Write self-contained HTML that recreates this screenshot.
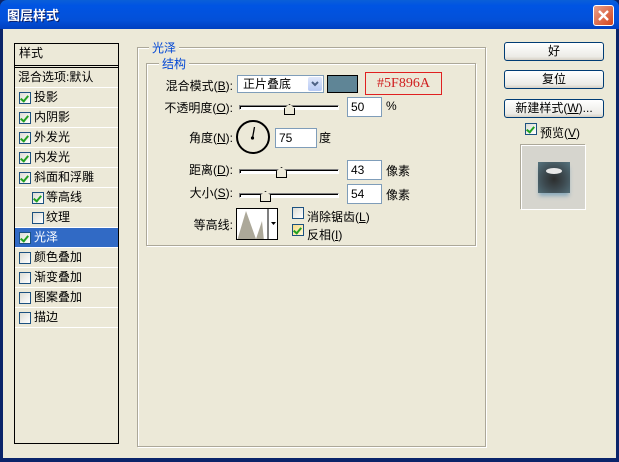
<!DOCTYPE html>
<html><head><meta charset="utf-8"><style>
*{margin:0;padding:0;box-sizing:border-box}
body{width:619px;height:462px;overflow:hidden;background:#0a246a;font-family:"Liberation Sans","Noto Sans CJK SC","WenQuanYi Zen Hei",sans-serif;font-size:12px;color:#000;position:relative}
.a{position:absolute}
#title{left:0;top:0;width:619px;height:29px;background:linear-gradient(#0a5fd8,#0054e3 20%,#0350d8 70%,#0040c0);border-radius:7px 7px 0 0}
#title span{position:absolute;left:7px;top:5px;color:#fff;font-weight:bold;font-size:13px;text-shadow:1px 1px #0a1e6a}
#close{left:593px;top:5px;width:21px;height:21px;background:linear-gradient(135deg,#e8a08a,#d3441c);border:1px solid #fff;border-radius:3px}
#body{left:3px;top:29px;width:613px;height:429px;background:#ece9d8}
#list{left:14px;top:43px;width:105px;height:401px;border:1px solid #000;background:#ece9d8}
.row{position:absolute;left:0;width:103px;height:20px;border-bottom:1px solid #fff;line-height:19px;font-size:12px}
.cb{position:absolute;top:4px;width:12px;height:12px;border:1px solid #1c5180;background:linear-gradient(135deg,#dcdcd4,#fff)}
.cb.c::after{content:"";position:absolute;left:2px;top:1px;width:3px;height:6px;border:solid #21a121;border-width:0 2px 2px 0;transform:rotate(40deg)}
.sel{background:#316ac5;color:#fff}
.grp{border:1px solid #aca899;box-shadow:1px 1px 0 #fff inset,1px 1px 0 #fff}
.leg{background:#ece9d8;color:#0046d5;padding:0 3px;font-size:12px}
.lbl{font-size:12px;text-align:right}
.inp{background:#fff;border:1px solid #7f9db9;height:20px;line-height:18px;padding-left:3px}
.track{height:5px;border:1px solid #000;border-color:#808080 #fff #fff #808080;background:#fff;box-shadow:inset 1px 1px #000}
.thumb{width:11px;height:11px;background:#ece9d8;border:1px solid #000;clip-path:polygon(50% 0,100% 40%,100% 100%,0 100%,0 40%)}
.btn{left:504px;width:100px;height:19px;border:1px solid #003c74;border-radius:3px;background:linear-gradient(#fff,#ecebe6 80%,#d6d0c5);text-align:center;line-height:17px;font-size:12px}
</style></head><body>
<div id="title" class="a"><span>图层样式</span></div>
<div id="close" class="a"><svg width="19" height="19"><path d="M5 5L14 14M14 5L5 14" stroke="#fff" stroke-width="2.4"/></svg></div>
<div id="body" class="a"></div>

<div id="list" class="a">
 <div class="row" style="top:0;padding-left:4px;border-bottom:3px double #000;height:24px">样式</div>
 <div class="row" style="top:24px;padding-left:3px">混合选项:默认</div>
 <div class="row" style="top:44px"><div class="cb c" style="left:4px"></div><span style="margin-left:19px">投影</span></div>
 <div class="row" style="top:64px"><div class="cb c" style="left:4px"></div><span style="margin-left:19px">内阴影</span></div>
 <div class="row" style="top:84px"><div class="cb c" style="left:4px"></div><span style="margin-left:19px">外发光</span></div>
 <div class="row" style="top:104px"><div class="cb c" style="left:4px"></div><span style="margin-left:19px">内发光</span></div>
 <div class="row" style="top:124px"><div class="cb c" style="left:4px"></div><span style="margin-left:19px">斜面和浮雕</span></div>
 <div class="row" style="top:144px"><div class="cb c" style="left:17px"></div><span style="margin-left:31px">等高线</span></div>
 <div class="row" style="top:164px"><div class="cb" style="left:17px"></div><span style="margin-left:31px">纹理</span></div>
 <div class="row sel" style="top:184px"><div class="cb c" style="left:4px"></div><span style="margin-left:19px">光泽</span></div>
 <div class="row" style="top:204px"><div class="cb" style="left:4px"></div><span style="margin-left:19px">颜色叠加</span></div>
 <div class="row" style="top:224px"><div class="cb" style="left:4px"></div><span style="margin-left:19px">渐变叠加</span></div>
 <div class="row" style="top:244px"><div class="cb" style="left:4px"></div><span style="margin-left:19px">图案叠加</span></div>
 <div class="row" style="top:264px"><div class="cb" style="left:4px"></div><span style="margin-left:19px">描边</span></div>
</div>

<div class="a grp" style="left:137px;top:47px;width:349px;height:400px"></div>
<div class="a leg" style="left:149px;top:39px">光泽</div>
<div class="a grp" style="left:146px;top:63px;width:330px;height:183px"></div>
<div class="a leg" style="left:159px;top:55px">结构</div>

<div class="a lbl" style="left:150px;top:77px;width:83px">混合模式(<u>B</u>):</div>
<div class="a inp" style="left:237px;top:75px;width:87px;height:18px;line-height:16px;padding-left:5px">正片叠底</div>
<div class="a" style="left:308px;top:77px;width:14px;height:14px;background:linear-gradient(#e0e8fb,#b6c9f4);border-radius:2px"><svg width="14" height="14"><path d="M4 5L7 8L10 5" stroke="#4d6185" stroke-width="2" fill="none"/></svg></div>
<div class="a" style="left:327px;top:75px;width:31px;height:18px;background:#5f8596;border:1px solid #000"></div>
<div class="a" style="left:365px;top:72px;width:77px;height:23px;border:1px solid #e02020;color:#d02020;font-family:'Liberation Serif',serif;font-size:14px;line-height:21px;text-align:center">#5F896A</div>

<div class="a lbl" style="left:150px;top:99px;width:83px">不透明度(<u>O</u>):</div>
<div class="a track" style="left:239px;top:105px;width:100px"></div>
<div class="a thumb" style="left:284px;top:104px"></div>
<div class="a inp" style="left:347px;top:97px;width:35px">50</div>
<div class="a" style="left:386px;top:99px">%</div>

<div class="a lbl" style="left:150px;top:129px;width:83px">角度(<u>N</u>):</div>
<div class="a" style="left:236px;top:120px;width:34px;height:34px;border:2px solid #000;border-radius:50%"></div>
<svg class="a" style="left:236px;top:120px" width="34" height="34"><path d="M16.5 18L18.5 7" stroke="#000" stroke-width="1.3"/><circle cx="16.5" cy="18" r="1.6"/></svg>
<div class="a inp" style="left:275px;top:128px;width:42px">75</div>
<div class="a" style="left:319px;top:129px">度</div>

<div class="a lbl" style="left:150px;top:161px;width:83px">距离(<u>D</u>):</div>
<div class="a track" style="left:239px;top:169px;width:100px"></div>
<div class="a thumb" style="left:276px;top:167px"></div>
<div class="a inp" style="left:347px;top:160px;width:35px">43</div>
<div class="a" style="left:386px;top:162px">像素</div>

<div class="a lbl" style="left:150px;top:184px;width:83px">大小(<u>S</u>):</div>
<div class="a track" style="left:239px;top:193px;width:100px"></div>
<div class="a thumb" style="left:260px;top:191px"></div>
<div class="a inp" style="left:347px;top:184px;width:35px">54</div>
<div class="a" style="left:386px;top:186px">像素</div>

<div class="a lbl" style="left:150px;top:216px;width:83px">等高线:</div>
<div class="a" style="left:236px;top:208px;width:42px;height:32px;border:1px solid #000;background:#fff;overflow:hidden">
<svg width="42" height="32"><path d="M0 32L9 2L19 30L25 12L27 32Z" fill="#aca899"/><path d="M31 0V32" stroke="#000"/><path d="M34 13h5l-2.5 3z" fill="#000"/></svg></div>
<div class="a cb" style="left:292px;top:207px;border-color:#1c5180"></div>
<div class="a" style="left:307px;top:208px">消除锯齿(<u>L</u>)</div>
<div class="a cb c" style="left:292px;top:224px;background:linear-gradient(135deg,#f6dc8a,#fff7d6)"></div>
<div class="a" style="left:307px;top:226px">反相(<u>I</u>)</div>

<div class="a btn" style="top:42px">好</div>
<div class="a btn" style="top:70px">复位</div>
<div class="a btn" style="top:99px">新建样式(<u>W</u>)...</div>
<div class="a cb c" style="left:525px;top:123px"></div>
<div class="a" style="left:540px;top:124px">预览(<u>V</u>)</div>
<div class="a" style="left:521px;top:145px;width:65px;height:65px;background:#d6d5ce;border:1px solid #fff;box-shadow:-1px -1px #aca899"></div>
<div class="a" style="left:538px;top:162px;width:32px;height:31px;background:radial-gradient(circle at 50% 55%,#2c2e2e,#3d4a50 45%,#56747f);box-shadow:0 4px 4px -1px #8aaabb"></div>
<div class="a" style="left:546px;top:168px;width:16px;height:6px;background:#e8e8e8;border-radius:50%"></div>
</body></html>
